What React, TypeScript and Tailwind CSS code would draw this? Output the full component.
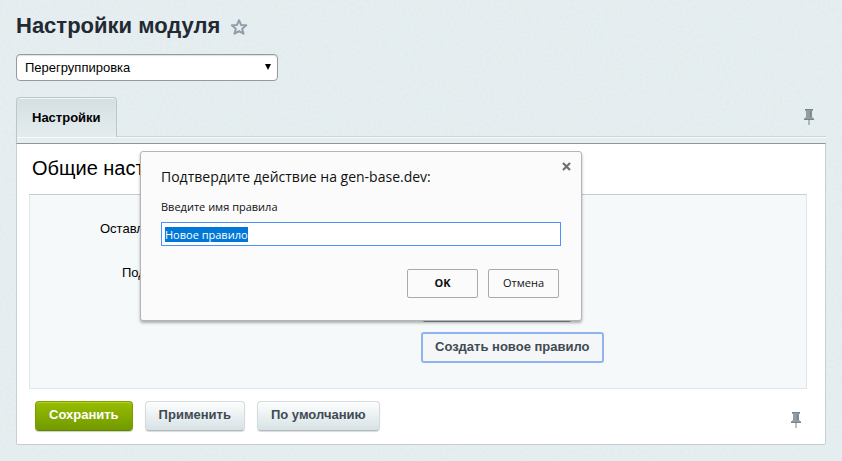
import React, { useId } from "react";

const PinIcon = () => (
  <svg width="10" height="17" viewBox="0 0 10 17" aria-hidden="true">
    <path d="M1 0h8v2H8v6l2 1.500V11H0V9.500L2 8V2H1z" fill="#929ca2" />
    <path d="M1 0h8v1H1zM0 10h10v1H0zM6 2h1.500v6H6z" fill="#78838a" />
    <path d="M4.500 11h1v5h-1z" fill="#78838a" />
  </svg>
);

const StarIcon = () => (
  <svg width="18" height="18" viewBox="0 0 18 18" aria-hidden="true">
    <path
      d="M9 2.200l2 4.700 5.200.400-4 3.400 1.300 5L9 13.100l-4.500 2.600 1.300-5-4-3.400L7 6.900z"
      fill="none"
      stroke="#929dab"
      strokeWidth="2"
      strokeLinejoin="round"
    />
  </svg>
);

const PaperTexture = () => {
  const id = useId();
  return (
    <svg className="pointer-events-none absolute inset-0 h-full w-full opacity-10" aria-hidden="true">
      <filter id={id}>
        <feTurbulence type="fractalNoise" baseFrequency="0.35" numOctaves="2" />
        <feColorMatrix type="matrix" values="0 0 0 0 0.45  0 0 0 0 0.58  0 0 0 0 0.62  1.6 0 0 0 -0.5" />
      </filter>
      <rect width="100%" height="100%" filter={`url(#${id})`} />
    </svg>
  );
};

const FormButton = ({ children }: { children: React.ReactNode }) => (
  <button
    type="button"
    className="h-[30px] rounded border border-[#d5dadc] border-b-[#b5bcbf] bg-linear-to-b from-[#fdfefe] to-[#d7e2e5] px-[13px] pb-0.5 text-[13px] leading-4 font-bold text-[#3f4b54] shadow-[0_1px_1px_rgba(0,0,0,0.15)]"
  >
    {children}
  </button>
);

const SettingsForm = () => (
  <div className="mr-[18px] ml-3 min-h-[195px] border border-[#dce7eb] border-t-[#c5cdd0] bg-[#f5f9f9] pt-[26px] pb-[25px] text-[13px] leading-4">
    <div className="flex h-11 items-start pl-[70px]">
      <label htmlFor="keep">Оставлять</label>
      <input id="keep" type="checkbox" className="ml-60" />
    </div>
    <div className="flex h-11 items-start pl-[92px]">
      <span>Подборка</span>
    </div>
    <div className="flex flex-col items-start gap-2.5 pl-[391px]">
      <select
        aria-label="Правило"
        className="-mt-[15px] h-7 w-[152px] appearance-none rounded border border-[#87919c] bg-white px-2"
      >
        <option>Правило</option>
      </select>
      <button
        type="button"
        className="h-[31px] rounded-[3px] border-2 border-[#8fb4f0] bg-[#f4f6f8] px-3 pb-0.5 text-[13px] leading-4 font-bold text-[#3f4b54]"
      >
        Создать новое правило
      </button>
    </div>
  </div>
);

const PromptDialog = () => (
  <div
    role="dialog"
    aria-labelledby="prompt-title"
    className="absolute top-[151px] left-[140px] w-[442px] rounded-[3px] border border-[#b5b5b5] bg-[#fbfbfb] px-5 pt-[15px] pb-[22px] font-['Open_Sans','Noto_Sans',sans-serif] text-[#111] shadow-[0_2px_3px_rgba(0,0,0,0.3)]"
  >
    <button type="button" aria-label="Закрыть" className="absolute top-2.5 right-2.5">
      <svg width="9" height="9" viewBox="0 0 9 9" aria-hidden="true">
        <path d="M1 1l7 7M8 1l-7 7" stroke="#707070" strokeWidth="2.200" />
      </svg>
    </button>
    <h2 id="prompt-title" className="text-sm leading-5">
      Подтвердите действие на gen-base.dev:
    </h2>
    <label htmlFor="rule-name" className="mt-3 block text-[11px] leading-4">
      Введите имя правила
    </label>
    <input
      id="rule-name"
      type="text"
      defaultValue="Новое правило"
      autoFocus
      onFocus={(e) => e.currentTarget.select()}
      className="mt-[7px] block h-6 w-full border border-[#4d90fe] bg-white px-[3px] text-[11px] leading-4 outline-none selection:bg-[#0078d7] selection:text-white"
    />
    <div className="mt-[23px] flex justify-end gap-2.5 pr-0.5 text-[11px] leading-4">
      <button
        type="button"
        className="h-[29px] w-[71px] rounded-xs border border-[#aaa] bg-[#fbfbfb] pb-0.5 font-bold"
      >
        OK
      </button>
      <button type="button" className="h-[29px] w-[71px] rounded-xs border border-[#aaa] bg-[#fbfbfb] pb-0.5">
        Отмена
      </button>
    </div>
  </div>
);

export default function App() {
  return (
    <div className="relative min-h-screen bg-[#e6eef0] px-4 pt-3 pb-4 font-['Liberation_Sans',Arial,sans-serif] text-black">
      <PaperTexture />
      <main className="relative">
        <header className="flex items-center gap-2.5">
          <h1 className="text-[22px] leading-7 font-bold text-[#222933]">Настройки модуля</h1>
          <button type="button" aria-label="В избранное" className="mt-0.5">
            <StarIcon />
          </button>
        </header>

        <div className="relative mt-3.5 w-[262px]">
          <select
            aria-label="Модуль"
            className="block h-[27px] w-full appearance-none rounded border border-[#949b9f] bg-white px-2 text-[13px] leading-4 shadow-[inset_0_1px_1px_rgba(0,0,0,0.12)]"
          >
            <option>Перегруппировка</option>
          </select>
          <svg
            className="pointer-events-none absolute top-2.5 right-[7px]"
            width="6"
            height="6"
            viewBox="0 0 6 6"
            aria-hidden="true"
          >
            <path d="M0 0h6L3 6z" fill="#000" />
          </svg>
        </div>

        <div className="mt-4 flex items-end">
          <button
            type="button"
            className="h-10 rounded-t border border-b-0 border-[#bcc6c9] bg-linear-to-b from-[#d5dfe1] to-[#e4ecee] px-[15px] text-[13px] leading-4 font-bold shadow-[inset_0_1px_0_#f0f5f6]"
          >
            Настройки
          </button>
          <div className="flex h-10 flex-1 items-end justify-end border-b border-[#ccd5d8] pr-3 pb-2.5">
            <button type="button" aria-label="Закрепить вкладки">
              <PinIcon />
            </button>
          </div>
        </div>
        <div className="h-1.5 border-l border-[#bcc6c9] bg-[#e7eef0] shadow-[inset_0_1px_0_#f6fafa]" />

        <section className="rounded-b-xs border border-t-[#8d979a] border-r-[#c6cfd2] border-b-[#c3cdd0] border-l-[#c6cfd2] bg-white">
          <h2 className="px-[15px] pt-3 pb-3.5 text-xl leading-6">Общие настройки</h2>
          <SettingsForm />
          <div className="flex items-center gap-3 pt-3 pr-6 pb-[13px] pl-[18px]">
            <button
              type="button"
              className="h-[30px] rounded border border-[#7b9b07] border-b-[#648400] bg-linear-to-b from-[#98bd00] to-[#719a00] px-[13px] pb-0.5 text-[13px] leading-4 font-bold text-white shadow-[inset_0_1px_0_#b4d321,0_1px_1px_rgba(0,0,0,0.2)]"
            >
              Сохранить
            </button>
            <FormButton>Применить</FormButton>
            <FormButton>По умолчанию</FormButton>
            <button type="button" aria-label="Закрепить кнопки" className="mt-2 ml-auto">
              <PinIcon />
            </button>
          </div>
        </section>
      </main>
      <PromptDialog />
    </div>
  );
}
